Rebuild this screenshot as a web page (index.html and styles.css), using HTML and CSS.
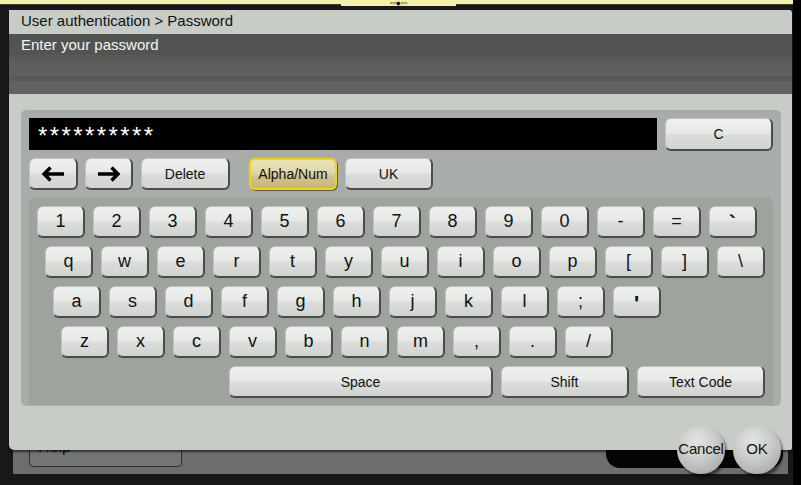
FILE: index.html
```html
<!DOCTYPE html>
<html>
<head>
<meta charset="utf-8">
<link rel="stylesheet" href="styles.css">
</head>
<body>
<div class="screen">
  <div class="topbar"><div class="tab">&lt;&lt;◆&gt;&gt;</div></div>
  <div class="spacer"></div>
  <div class="footer">
    <div class="help">Help</div>
    <div class="okwell"></div>
  </div>
</div>

<div class="dialog">
  <div class="crumb">User authentication &gt; Password</div>
  <div class="banner">Enter your password</div>
  <div class="body">
    <div class="panel">
      <div class="row-top">
        <div class="field">**********</div>
        <div class="btn btn-c">C</div>
      </div>
      <div class="row-ctrl">
        <div class="btn btn-left"><svg width="24" height="16" viewBox="0 0 24 16"><path d="M23 8H3M9.5 1.5L3 8l6.5 6.5" fill="none" stroke="#000" stroke-width="3.4"/></svg></div>
        <div class="btn btn-right"><svg width="24" height="16" viewBox="0 0 24 16"><path d="M1 8h20M14.5 1.5L21 8l-6.5 6.5" fill="none" stroke="#000" stroke-width="3.4"/></svg></div>
        <div class="btn btn-delete">Delete</div>
        <div class="btn btn-alpha">Alpha/Num</div>
        <div class="btn btn-uk">UK</div>
      </div>
      <div class="keyboard">
        <div class="krow r1">
          <div class="btn key">1</div><div class="btn key">2</div><div class="btn key">3</div><div class="btn key">4</div><div class="btn key">5</div><div class="btn key">6</div><div class="btn key">7</div><div class="btn key">8</div><div class="btn key">9</div><div class="btn key">0</div><div class="btn key">-</div><div class="btn key">=</div><div class="btn key grave">`</div>
        </div>
        <div class="krow r2">
          <div class="btn key">q</div><div class="btn key">w</div><div class="btn key">e</div><div class="btn key">r</div><div class="btn key">t</div><div class="btn key">y</div><div class="btn key">u</div><div class="btn key">i</div><div class="btn key">o</div><div class="btn key">p</div><div class="btn key">[</div><div class="btn key">]</div><div class="btn key">\</div>
        </div>
        <div class="krow r3">
          <div class="btn key">a</div><div class="btn key">s</div><div class="btn key">d</div><div class="btn key">f</div><div class="btn key">g</div><div class="btn key">h</div><div class="btn key">j</div><div class="btn key">k</div><div class="btn key">l</div><div class="btn key">;</div><div class="btn key apos">'</div>
        </div>
        <div class="krow r4">
          <div class="btn key">z</div><div class="btn key">x</div><div class="btn key">c</div><div class="btn key">v</div><div class="btn key">b</div><div class="btn key">n</div><div class="btn key">m</div><div class="btn key">,</div><div class="btn key">.</div><div class="btn key">/</div>
        </div>
        <div class="krow r5">
          <div class="btn wide space">Space</div>
          <div class="btn wide shift">Shift</div>
          <div class="btn wide textcode">Text Code</div>
        </div>
      </div>
    </div>
  </div>
  <div class="round cancel">Cancel</div>
  <div class="round ok">OK</div>
</div>
</body>
</html>
```

FILE: styles.css
```css
html, body {
  margin: 0;
  padding: 0;
}
body {
  width: 801px;
  height: 485px;
  overflow: hidden;
  position: relative;
  background: #181818;
  font-family: "Liberation Sans", Arial, sans-serif;
  color: #111;
}

/* background screen */
.screen {
  height: 485px;
  display: flex;
  flex-direction: column;
  border-right: 8px solid #000;
  box-sizing: border-box;
}
.topbar {
  flex: none;
  height: 4px;
  background: #f4f0a8;
  border-bottom: 1px solid #3a3a30;
  display: flex;
  justify-content: center;
}
.tab {
  width: 115px;
  height: 6px;
  background: #f4f0a8;
  font-size: 6px;
  line-height: 6px;
  text-align: center;
  color: #000;
  margin-left: 4px;
  letter-spacing: -0.3px;
}
.spacer {
  flex: 1;
}
.footer {
  flex: none;
  height: 54px;
  margin: 0 5px 11px 13px;
  background: #6b6e6b;
  display: flex;
  align-items: flex-end;
  justify-content: space-between;
  padding: 0 5px 6px 16px;
}
.help {
  width: 153px;
  height: 40px;
  margin-bottom: 1px;
  background: #727572;
  border: 1px solid #2e302e;
  border-radius: 4px;
  font-size: 16px;
  line-height: 38px;
  padding-left: 8px;
  box-sizing: border-box;
  color: #111;
}
.okwell {
  width: 177px;
  height: 40px;
  background: #050505;
  border-radius: 14px;
}

/* dialog overlay */
.dialog {
  position: absolute;
  left: 9px;
  top: 10px;
  width: 783px;
  height: 440px;
  background: #c8ccc7;
  border-radius: 0 3px 2px 5px;
  box-shadow: 0 2px 2px rgba(0,0,0,0.55);
}
.crumb {
  height: 24px;
  line-height: 22px;
  padding-left: 12px;
  font-size: 15px;
  color: #111;
}
.banner {
  height: 60px;
  box-sizing: border-box;
  padding: 1px 0 0 12px;
  font-size: 15px;
  line-height: 20px;
  color: #f4f4f4;
  background: linear-gradient(#525452 0, #525452 21px, #585a58 21px, #585a58 27px, #5e605e 27px, #5e605e 42px, #585a58 42px, #585a58 47px, #616361 47px, #616361 60px);
}
.body {
  padding: 16px 11px 0 12px;
}
.panel {
  width: 760px;
  height: 296px;
  box-sizing: border-box;
  background: #a9ada9;
  border-radius: 5px;
  padding: 8px 8px 1px 8px;
  display: flex;
  flex-direction: column;
  gap: 8px;
}

/* buttons */
.btn {
  box-sizing: border-box;
  height: 32px;
  display: flex;
  align-items: center;
  justify-content: center;
  border: 1px solid #bfc2bf;
  border-right: 2px solid #4b4d4b;
  border-bottom: 2px solid #4b4d4b;
  border-radius: 6px;
  background: linear-gradient(#edf0ed 0%, #e6e9e6 45%, #d9dcd9 55%, #d1d4d1 100%);
  font-size: 14px;
  color: #111;
}
.row-top {
  display: flex;
  height: 32px;
  gap: 8px;
  align-items: flex-start;
}
.field {
  width: 628px;
  height: 32px;
  box-sizing: border-box;
  background: #000;
  color: #fff;
  font-size: 24px;
  line-height: 32px;
  padding: 2px 0 0 9px;
  letter-spacing: 2.4px;
}
.btn-c {
  width: 108px;
  height: 33px;
}
.row-ctrl {
  display: flex;
  height: 32px;
}
.btn-left { width: 49px; }
.btn-right { width: 48px; margin-left: 7px; }
.btn-delete { width: 89px; margin-left: 8px; }
.btn-alpha {
  width: 88px;
  margin-left: 19px;
  border: 2px solid #f2d600;
  box-shadow: 1px 1px 0 #5a5a48;
  background: linear-gradient(#e9e3bd 0%, #e0d6a6 45%, #d2c38a 60%, #c7b47b 100%);
}
.btn-uk { width: 88px; margin-left: 8px; }

/* keyboard */
.keyboard {
  width: 744px;
  height: 207px;
  box-sizing: border-box;
  background: #9ea39e;
  border-radius: 5px 5px 0 0;
  padding: 8px 8px 0 8px;
  display: flex;
  flex-direction: column;
  gap: 8px;
}
.krow {
  display: flex;
  gap: 8px;
  height: 32px;
}
.r2 { padding-left: 8px; }
.r3 { padding-left: 16px; }
.r4 { padding-left: 24px; }
.r5 { justify-content: flex-end; }
.key {
  width: 48px;
  font-size: 18px;
}
.grave {
  font-size: 22px;
  font-weight: bold;
  padding-top: 4px;
}
.apos {
  font-size: 22px;
  font-weight: bold;
  padding-top: 4px;
}
.space { width: 264px; }
.shift { width: 128px; }
.textcode { width: 128px; }

/* round action buttons */
.round {
  position: absolute;
  top: 416px;
  width: 48px;
  height: 48px;
  border-radius: 50%;
  background: radial-gradient(circle at 42% 32%, #e2e4e2 0%, #cfd1cf 35%, #b4b6b4 70%, #8f918f 100%);
  box-shadow: 2px 3px 3px rgba(0,0,0,0.55);
  display: flex;
  align-items: center;
  justify-content: center;
  font-size: 15px;
  color: #111;
  padding-bottom: 3px;
  box-sizing: border-box;
}
.cancel { left: 668px; letter-spacing: -0.2px; }
.ok { left: 724px; }
```
